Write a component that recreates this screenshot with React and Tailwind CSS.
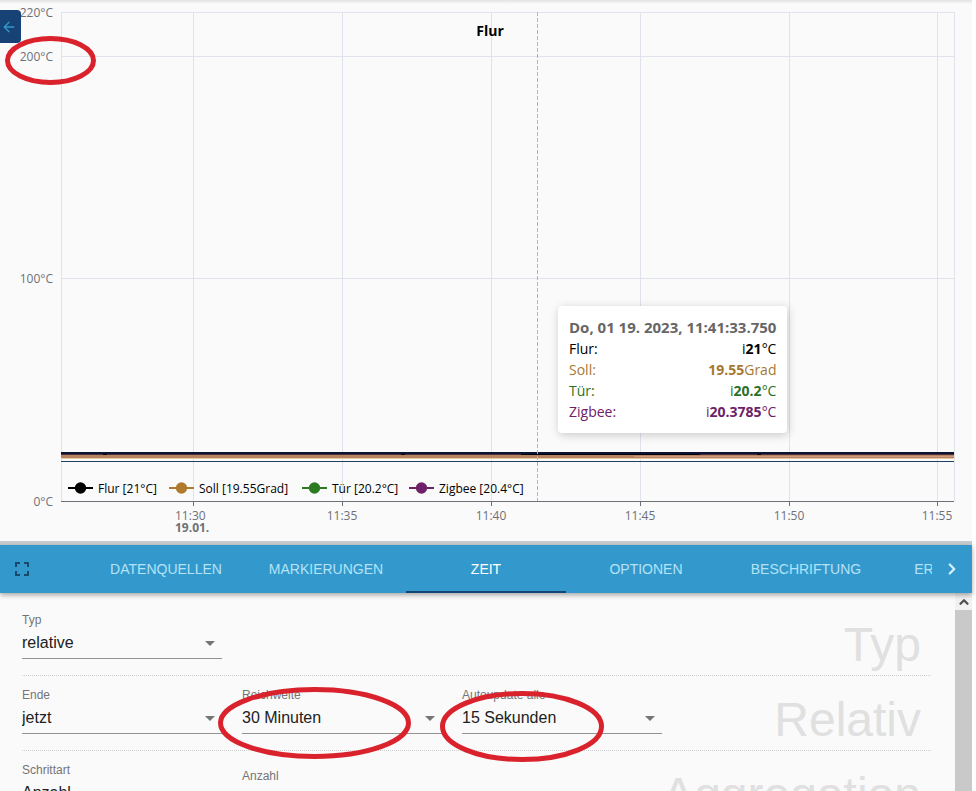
import React, { useState } from 'react';
import { ArrowLeft, ChevronRight, ChevronUp } from 'lucide-react';
import { MdArrowDropDown, MdFullscreen } from 'react-icons/md';

const yTicks = [
  { y: 12, lbl: '220°C' },
  { y: 56, lbl: '200°C' },
  { y: 278, lbl: '100°C' },
  { y: 501, lbl: '0°C' }
];

const xTicks = [
  { x: 193, lbl: '11:30', date: '19.01.' },
  { x: 342, lbl: '11:35' },
  { x: 491, lbl: '11:40' },
  { x: 640, lbl: '11:45' },
  { x: 789, lbl: '11:50' },
  { x: 937, lbl: '11:55' }
];

const legend = [
  { x: 68, lbl: 'Flur [21°C]', color: '#000000' },
  { x: 169, lbl: 'Soll [19.55Grad]', color: '#b07a2e' },
  { x: 302, lbl: 'Tür [20.2°C]', color: '#2a7a22' },
  { x: 409, lbl: 'Zigbee [20.4°C]', color: '#6e2069' }
];

const values = [
  { name: 'Flur:', pre: 'i', val: '21', unit: '°C', cls: 'text-black' },
  { name: 'Soll:', pre: '', val: '19.55', unit: 'Grad', cls: 'text-[#a87830]' },
  { name: 'Tür:', pre: 'i', val: '20.2', unit: '°C', cls: 'text-[#2a7028]' },
  { name: 'Zigbee:', pre: 'i', val: '20.3785', unit: '°C', cls: 'text-[#6e2069]' }
];

const tabs = ['Datenquellen', 'Markierungen', 'Zeit', 'Optionen', 'Beschriftung', 'Erscheinung'];

const Chart = () => (
  <svg viewBox="0 0 972 541" className="block w-full h-auto font-['Open_Sans',sans-serif]" role="img" aria-label="Flur">
    {yTicks.map(t => (
      <g key={t.lbl}>
        <line x1="61" x2="954" y1={t.y + 0.5} y2={t.y + 0.5} stroke="#e0e2ec" />
        <text x="53" y={t.y + 5} textAnchor="end" fontSize="12" fill="#6e7079">{t.lbl}</text>
      </g>
    ))}
    <path d="M61.5 12V501M954.5 12V501" stroke="#e0e2ec" />
    {xTicks.map(t => (
      <g key={t.lbl}>
        <line x1={t.x + 0.5} x2={t.x + 0.5} y1="12" y2="501" stroke="#e0e2ec" />
        <line x1={t.x + 0.5} x2={t.x + 0.5} y1="501" y2="506" stroke="#6e7079" />
        {/* a tick with a date is left-aligned to the date below it */}
        {t.date ? (
          <>
            <text x={t.x - 18} y="520" fontSize="12" fill="#6e7079">{t.lbl}</text>
            <text x={t.x - 18} y="532" fontSize="12" fontWeight="700" fill="#6e7079">{t.date}</text>
          </>
        ) : (
          <text x={t.x} y="520" textAnchor="middle" fontSize="12" fill="#6e7079">{t.lbl}</text>
        )}
      </g>
    ))}
    <line x1="61" x2="954" y1="501.5" y2="501.5" stroke="#6e7079" />

    {/* series */}
    <rect x="61" y="455" width="893" height="3" fill="#b5835e" />
    <rect x="61" y="458" width="893" height="1" fill="#e8c9a4" />
    <rect x="634" y="456" width="320" height="1" fill="#d39a80" />
    <rect x="61" y="454" width="893" height="1" fill="#4a2f3c" />
    <rect x="61" y="452" width="893" height="2" fill="#0c1230" />
    <path d="M521 454.500H700M103 454.500h4M401 454.500h4M757 454.500h4" stroke="#000014" />
    <rect x="61" y="461" width="893" height="1" fill="#1d4060" />

    <line x1="537.5" x2="537.5" y1="12" y2="501" stroke="#b4b4ba" strokeDasharray="4 2" />
    <text x="490" y="36" textAnchor="middle" fontSize="14" fontWeight="700" fill="#000">Flur</text>

    {legend.map(l => (
      <g key={l.lbl}>
        <line x1={l.x} x2={l.x + 25} y1="488" y2="488" stroke={l.color} strokeWidth="2" />
        <circle cx={l.x + 12.5} cy="488" r="5.700" fill={l.color} />
        <text x={l.x + 30} y="493" fontSize="12" fill="#000">{l.lbl}</text>
      </g>
    ))}
  </svg>
);

const ChartTooltip = () => (
  <div className="absolute left-[558px] top-[306px] rounded bg-white px-[11px] py-[11px] text-[15px] leading-[21px] shadow-[1px_2px_10px_rgba(0,0,0,0.2)] font-['Open_Sans',sans-serif]">
    <div className="font-bold text-[#666]">Do, 01 19. 2023, 11:41:33.750</div>
    {values.map(v => (
      <div key={v.name} className={`flex justify-between text-sm leading-[21px] ${v.cls}`}>
        <span>{v.name}</span>
        <span>{v.pre}<b>{v.val}</b>{v.unit}</span>
      </div>
    ))}
  </div>
);

const SelectField = ({ id, label, options }) => (
  <div className="w-[200px] shrink-0">
    <label htmlFor={id} className="block text-xs leading-4 text-[#757575]">{label}</label>
    <div className="relative">
      <select id={id} className="block w-full h-[31px] appearance-none border-b border-[#949494] bg-transparent text-base text-[#212121] outline-none">
        {options.map(o => <option key={o}>{o}</option>)}
      </select>
      <MdArrowDropDown size={24} className="absolute right-0 top-[3px] text-[#757575] pointer-events-none" />
    </div>
  </div>
);

const Row = ({ title, children }) => (
  <div className="flex items-start gap-5 h-[75px] shrink-0 pt-[11px] border-b border-dotted border-[#cfcfcf]">
    {children}
    <h2 className="ml-auto pr-[10px] pt-[9px] text-5xl leading-[48px] text-[#e0e0e0]">{title}</h2>
  </div>
);

const App = () => {
  const [active, setActive] = useState('Zeit');

  return (
    <div className="relative flex flex-col h-screen overflow-hidden bg-white pr-1 font-['Liberation_Sans',Arial,sans-serif]">
      <section className="relative shrink-0 bg-[#fafafa] border-b-4 border-[#c8cccf]">
        <Chart />
        <div className="absolute inset-x-0 top-0 h-1 bg-linear-to-b from-[#e2e2e2] to-[#fafafa]" />
        <button aria-label="Zurück" className="absolute left-0 top-[10px] flex items-center w-[21px] h-[33px] pl-px rounded-r bg-[#174275] text-[#3399cc]">
          <ArrowLeft size={16} strokeWidth={2} className="shrink-0" />
        </button>
        <ChartTooltip />
      </section>

      <header className="relative z-10 flex h-12 shrink-0 bg-[#3399cc] shadow-[0_2px_5px_rgba(0,0,0,0.35)]">
        <button aria-label="Vollbild" className="flex items-center justify-center w-11 shrink-0 text-[#174a6b]">
          <MdFullscreen size={24} />
        </button>
        <nav role="tablist" className="flex flex-1 min-w-0 ml-[42px] overflow-hidden">
          {tabs.map(tab => (
            <button
              key={tab}
              role="tab"
              aria-selected={active === tab}
              onClick={() => setActive(tab)}
              className={`w-40 shrink-0 border-b-2 pt-[2px] text-sm uppercase ${active === tab ? 'border-[#164477] text-white' : 'border-transparent text-[#b4e2f7]'}`}
            >
              {tab}
            </button>
          ))}
        </nav>
        <button aria-label="Weiter" className="flex items-center justify-center w-10 shrink-0 text-[#d5f0fb]">
          <ChevronRight size={18} strokeWidth={3} />
        </button>
      </header>

      <main className="flex flex-1 min-h-0 bg-[#fafafa]">
        <form className="flex flex-col flex-1 min-w-0 overflow-hidden pl-[22px] pr-6 pt-2">
          <Row title="Typ">
            <SelectField id="typ" label="Typ" options={['relative']} />
          </Row>
          <Row title="Relativ">
            <SelectField id="ende" label="Ende" options={['jetzt']} />
            <SelectField id="reichweite" label="Reichweite" options={['30 Minuten']} />
            <SelectField id="autoupdate" label="Autoupdate alle" options={['15 Sekunden']} />
          </Row>
          <Row title="Aggregation">
            <SelectField id="schrittart" label="Schrittart" options={['Anzahl']} />
            <div className="w-[200px] shrink-0 pt-[6px]">
              <label htmlFor="anzahl" className="block text-xs leading-4 text-[#757575]">Anzahl</label>
              <input id="anzahl" type="number" className="block w-full h-[31px] border-b border-[#949494] bg-transparent text-base outline-none" />
            </div>
          </Row>
        </form>
        <div className="flex flex-col w-[17px] shrink-0 bg-[#c9c9c9]">
          <div className="flex items-center justify-center h-[17px] bg-[#f1f1f1] text-[#505050]">
            <ChevronUp size={14} strokeWidth={4} />
          </div>
        </div>
      </main>

      {/* red markers */}
      <svg className="absolute inset-0 z-20 w-full h-full pointer-events-none" fill="none" stroke="#d9222c" strokeWidth="5">
        <ellipse cx="50.5" cy="60.5" rx="43" ry="22" />
        <ellipse cx="314.5" cy="723" rx="94" ry="33.5" />
        <ellipse cx="522" cy="726.5" rx="79.5" ry="33" />
      </svg>
    </div>
  );
};

export default App;
